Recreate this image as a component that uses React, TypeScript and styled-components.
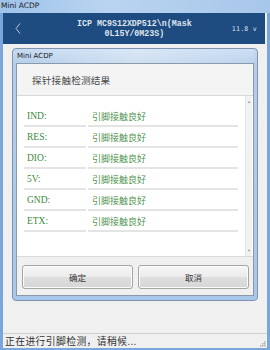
import React from "react";
import styled, {createGlobalStyle} from "styled-components";

const GlobalStyle = createGlobalStyle`
  html, body {
    margin: 0;
    padding: 0;
    width: 270px;
    height: 350px;
    overflow: hidden;
    background: #f0f0f0;
  }
  * { box-sizing: border-box; }
`

const cjk = `"Noto Sans CJK SC", "DejaVu Sans", sans-serif`

const Window = styled.div`
  width: 270px;
  height: 350px;
  display: flex;
  flex-direction: column;
  background: #7aa7db;
`
const TitleBar = styled.div`
  height: 13px;
  padding-left: 1px;
  font-family: "DejaVu Sans", sans-serif;
  font-size: 7.5px;
  line-height: 12px;
  color: #1a1a1a;
  background: linear-gradient(90deg, #9fc3ea 0%, #b9d4f0 40%, #a7c7ea 100%);
`
const Body = styled.div`
  flex: 1;
  margin: 0 3px 2px 3px;
  display: flex;
  flex-direction: column;
  background: #f0f0f0;
  min-height: 0;
`
const Header = styled.div`
  height: 31px;
  margin-right: 2px;
  background: #1f4c80;
  display: flex;
  align-items: center;
  padding: 0 8px 0 12px;
  color: #dfe6ef;
`
const Back = styled.svg`
  width: 6px;
  height: 11px;
  flex: none;
`
const HeaderTitle = styled.div`
  flex: 1;
  text-align: center;
  font-family: "Liberation Mono", monospace;
  font-size: 8.3px;
  font-weight: bold;
  line-height: 9.5px;
  white-space: pre;
  padding-left: 16px;
`
const Volt = styled.div`
  font-family: "DejaVu Sans Mono", monospace;
  font-size: 6.5px;
  letter-spacing: 0.3px;
`
const Main = styled.div`
  flex: 1;
  padding: 4px 9px 0 9px;
`
const Dialog = styled.div`
  width: 246px;
  height: 253px;
  border: 1px solid #7e93ad;
  border-radius: 4px;
  background: linear-gradient(180deg, #c6dbf2 0px, #b4cde9 16px, #a9c7e8 100%);
  display: flex;
  flex-direction: column;
  padding: 0 3px 4px 3px;
`
const DialogTitle = styled.div`
  height: 14px;
  padding-left: 1px;
  font-family: "DejaVu Sans", sans-serif;
  font-size: 7px;
  line-height: 15px;
  color: #1a1a1a;
  background: linear-gradient(90deg, rgba(255,255,255,0) 0%, rgba(255,255,255,0.35) 50%, rgba(255,255,255,0.1) 100%);
`
const Content = styled.div`
  flex: 1;
  border: 1px solid #8b9aab;
  background: #f0f0f0;
  display: flex;
  flex-direction: column;
`
const Band = styled.div`
  height: 32px;
  padding-left: 15px;
  font-family: ${cjk};
  font-size: 9.6px;
  letter-spacing: 0.2px;
  line-height: 32px;
  color: #4a4a4a;
  background: #f4f4f4;
  border-bottom: 1px solid #d9d9d9;
`
const ListWrap = styled.div`
  height: 161px;
  display: flex;
  background: #ffffff;
  border-bottom: 1px solid #dadada;
`
const List = styled.div`
  flex: 1;
  padding: 10px 7px 0 7px;
`
const Row = styled.div`
  height: 21px;
  display: grid;
  grid-template-columns: 62px 150px;
  column-gap: 2px;
`
const Cell = styled.div<{ $serif?: boolean }>`
  border-bottom: 2px solid #e4e4e4;
  padding-left: ${p => p.$serif ? "3px" : "4px"};
  padding-top: 1px;
  display: flex;
  align-items: center;
  color: ${p => p.$serif ? "#3d8a3d" : "#4f9450"};
  font-family: ${p => p.$serif ? `"Liberation Serif", serif` : cjk};
  font-size: ${p => p.$serif ? "9.5px" : "9px"};
`
const Scrollbar = styled.div`
  width: 8px;
  margin-right: 1px;
  background: #f2f2f2;
  border-left: 1px solid #e6e6e6;
  display: flex;
  flex-direction: column;
  justify-content: space-between;
  align-items: center;
  padding: 3px 0;
  color: #9a9a9a;
  font-size: 4px;
  line-height: 5px;
`
const Footer = styled.div`
  flex: 1;
  display: flex;
  gap: 5px;
  padding: 8px 4px 0 5px;
`
const Button = styled.div`
  flex: 1;
  height: 24px;
  border: 1px solid #a5a5a5;
  border-radius: 3px;
  background: linear-gradient(180deg, #f6f6f6 0%, #ececec 48%, #dedede 52%, #d6d6d6 100%);
  box-shadow: inset 0 0 0 1px #fbfbfb;
  display: flex;
  align-items: center;
  justify-content: center;
  font-family: ${cjk};
  font-size: 8.5px;
  color: #333;
`
const StatusBar = styled.div`
  height: 15px;
  border-top: 1px solid #cfcfcf;
  padding-left: 2px;
  display: flex;
  align-items: center;
  justify-content: space-between;
  font-family: ${cjk};
  font-size: 9.8px;
  letter-spacing: 0.4px;
  color: #333;
`
const Grip = styled.svg`
  width: 6px;
  height: 6px;
  margin: 6px 1px 0 0;
`

const rows = ["IND", "RES", "DIO", "5V", "GND", "ETX"]

export default function App() {
  return <>
    <GlobalStyle/>
    <Window>
      <TitleBar>Mini ACDP</TitleBar>
      <Body>
        <Header>
          <Back viewBox="0 0 6 11">
            <path d="M5 0.5 L1 5.5 L5 10.5" fill="none" stroke="#c8d4e2" strokeWidth="0.9"/>
          </Back>
          <HeaderTitle>{"ICP MC9S12XDP512\\n(Mask\n0L15Y/0M23S)"}</HeaderTitle>
          <Volt>11.8 v</Volt>
        </Header>
        <Main>
          <Dialog>
            <DialogTitle>Mini ACDP</DialogTitle>
            <Content>
              <Band>探针接触检测结果</Band>
              <ListWrap>
                <List>
                  {rows.map(r =>
                    <Row key={r}>
                      <Cell $serif>{r}:</Cell>
                      <Cell>引脚接触良好</Cell>
                    </Row>
                  )}
                </List>
                <Scrollbar><span>▲</span><span>▼</span></Scrollbar>
              </ListWrap>
              <Footer>
                <Button>确定</Button>
                <Button>取消</Button>
              </Footer>
            </Content>
          </Dialog>
        </Main>
        <StatusBar>
          <span>正在进行引脚检测，请稍候...</span>
          <Grip viewBox="0 0 6 6">
            <rect x="4" y="0" width="1.5" height="1.5" fill="#b0b0b0"/>
            <rect x="2" y="2" width="1.5" height="1.5" fill="#b0b0b0"/>
            <rect x="4" y="2" width="1.5" height="1.5" fill="#b0b0b0"/>
            <rect x="0" y="4" width="1.5" height="1.5" fill="#b0b0b0"/>
            <rect x="2" y="4" width="1.5" height="1.5" fill="#b0b0b0"/>
            <rect x="4" y="4" width="1.5" height="1.5" fill="#b0b0b0"/>
          </Grip>
        </StatusBar>
      </Body>
    </Window>
  </>
}
